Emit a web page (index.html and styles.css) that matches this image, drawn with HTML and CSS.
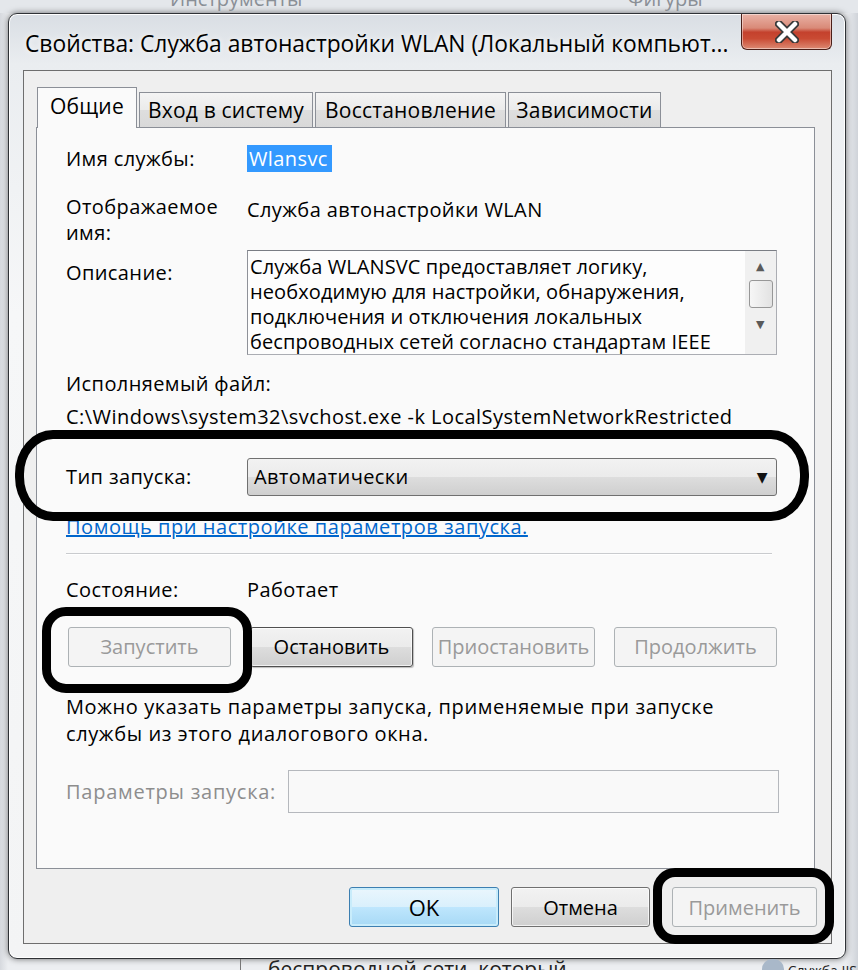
FILE: index.html
```html
<!DOCTYPE html>
<html lang="ru">
<head>
    <meta charset="UTF-8">
    <title>Свойства: Служба автонастройки WLAN</title>
    <link rel="stylesheet" href="styles.css">
</head>
<body>
    <div class="desk-top">
        <span class="desk-word first">Инструменты</span>
        <span class="desk-word">Фигуры</span>
    </div>

    <div class="window">
        <div class="titlebar">
            <div class="title">Свойства: Служба автонастройки WLAN (Локальный компьют...</div>
            <div class="close-btn">
                <svg width="24" height="22" viewBox="0 0 24 22">
                    <path d="M4 3 L20 19 M20 3 L4 19" stroke="#3a3a3a" stroke-width="8" stroke-linecap="round"/>
                    <path d="M4 3 L20 19 M20 3 L4 19" stroke="#ffffff" stroke-width="4.5" stroke-linecap="round"/>
                </svg>
            </div>
        </div>

        <div class="client">
            <div class="tabs">
                <div class="tab active">Общие</div>
                <div class="tab tab-logon">Вход в систему</div>
                <div class="tab tab-recovery">Восстановление</div>
                <div class="tab tab-deps">Зависимости</div>
            </div>

            <div class="panel">
                <div class="field r-name">
                    <div class="label">Имя службы:</div>
                    <div><span class="selected">Wlansvc</span></div>
                </div>
                <div class="field r-display">
                    <div class="label">Отображаемое<br>имя:</div>
                    <div class="value">Служба автонастройки WLAN</div>
                </div>
                <div class="field r-desc">
                    <div class="label desc-label">Описание:</div>
                    <div class="desc-box">
                        <div class="desc-text">Служба WLANSVC предоставляет логику,<br>необходимую для настройки, обнаружения,<br>подключения и отключения локальных<br>беспроводных сетей согласно стандартам IEEE</div>
                        <div class="scrollbar">
                            <span class="arrow">&#9650;</span>
                            <span class="thumb"></span>
                            <span class="arrow">&#9660;</span>
                        </div>
                    </div>
                </div>
                <div class="line r-exe">Исполняемый файл:</div>
                <div class="line r-path">C:\Windows\system32\svchost.exe -k LocalSystemNetworkRestricted</div>
                <div class="field r-type">
                    <div class="label">Тип запуска:</div>
                    <div class="combo">
                        <span>Автоматически</span>
                        <span class="combo-arrow">&#9660;</span>
                    </div>
                </div>
                <a class="help-link" href="#">Помощь при настройке параметров запуска.</a>
                <div class="sep"></div>
                <div class="field r-state">
                    <div class="label">Состояние:</div>
                    <div class="value">Работает</div>
                </div>
                <div class="svc-btns">
                    <div class="btn disabled">Запустить</div>
                    <div class="btn btn-stop">Остановить</div>
                    <div class="btn disabled">Приостановить</div>
                    <div class="btn disabled">Продолжить</div>
                </div>
                <div class="hint">Можно указать параметры запуска, применяемые при запуске<br>службы из этого диалогового окна.</div>
                <div class="params">
                    <div class="label muted">Параметры запуска:</div>
                    <div class="param-input"></div>
                </div>
            </div>

            <div class="dlg-btns">
                <div class="btn btn-ok">OK</div>
                <div class="btn btn-cancel">Отмена</div>
                <div class="btn disabled btn-apply">Применить</div>
            </div>
        </div>
    </div>

    <div class="desk-bottom">
        <span class="desk-line"></span>
        <span class="desk-text">беспроводной сети, который</span>
        <span class="desk-icon"></span>
        <span class="desk-text small">Служба IIS А</span>
    </div>

    <!-- пометки маркером поверх окна -->
    <div class="mark mark-type"></div>
    <div class="mark mark-start"></div>
    <div class="mark mark-apply"></div>
</body>
</html>
```

FILE: styles.css
```css
body {
    margin: 0;
    width: 858px;
    height: 970px;
    overflow: hidden;
    position: relative;
    font-family: "Open Sans", "DejaVu Sans", sans-serif;
    background: linear-gradient(to right, #d6d9de 0, #eceef1 8px, #eceef1 846px, #cfd3d9 858px);
    color: #000;
}
.desk-top {
    height: 13px;
    overflow: hidden;
    background: #e4e7eb;
    color: #8a8f96;
    font-size: 20px;
    line-height: 20px;
    white-space: nowrap;
}
.desk-word {
    display: inline-block;
    margin-top: -11px;
    vertical-align: top;
    margin-left: 320px;
}
.desk-word.first {
    margin-left: 170px;
}
.window {
    margin-left: 8px;
    width: 836px;
    height: 944px;
    border: 1px solid #2f3236;
    border-radius: 9px;
    background: linear-gradient(to bottom, #d9dee4 0, #eaedf0 50px, #f6f7f8 300px, #f3f4f5 100%);
    box-shadow: 0 0 6px rgba(0, 0, 0, 0.55), inset 0 0 0 1px #ffffff;
}
.titlebar {
    display: flex;
    height: 56px;
}
.title {
    padding: 14px 0 0 16px;
    font-size: 22.8px;
    white-space: nowrap;
    text-shadow: 0 0 6px #ffffff;
}
.close-btn {
    margin-left: auto;
    margin-right: 13px;
    width: 89px;
    height: 35px;
    border: 1px solid #4b1f18;
    border-top: none;
    border-radius: 0 0 6px 6px;
    background: linear-gradient(to bottom, #e9b2a6 0, #d98a78 40%, #c4412d 52%, #c94a33 70%, #dd8a73 100%);
    box-shadow: inset 0 0 0 1px rgba(255, 255, 255, 0.45);
    display: flex;
    justify-content: center;
    align-items: center;
}
.client {
    margin-left: 14px;
    width: 807px;
    height: 872px;
    border: 1px solid #6e6e6e;
    background: #efefef;
}
.tabs {
    display: flex;
    align-items: flex-end;
    padding: 16px 0 0 13px;
    height: 40px;
    position: relative;
    z-index: 1;
}
.tab {
    height: 35px;
    box-sizing: border-box;
    border: 1px solid #8b8f97;
    border-bottom: none;
    margin-left: 2px;
    text-align: center;
    font-size: 21px;
    line-height: 35px;
    letter-spacing: 0.2px;
    background: linear-gradient(to bottom, #f4f4f4 0, #ebebeb 50%, #dedede 51%, #d9d9d9 100%);
}
.tab.active {
    width: 100px;
    height: 41px;
    line-height: 36px;
    margin-left: 0;
    margin-bottom: -1px;
    background: #fafafa;
}
.tab-logon {
    width: 174px;
}
.tab-recovery {
    width: 191px;
}
.tab-deps {
    width: 153px;
}
.panel {
    margin-left: 12px;
    border: 1px solid #8b8f97;
    background: #fafafa;
    padding-left: 29px;
    box-sizing: border-box;
    width: 779px;
    height: 742px;
    font-size: 20px;
    line-height: 26px;
    letter-spacing: 0.4px;
}
.field {
    display: grid;
    grid-template-columns: 181px 532px;
}
.line {
    white-space: nowrap;
}
.r-name {
    margin-top: 17px;
    line-height: 27px;
}
.selected {
    display: inline-block;
    background: #3399ff;
    color: #fff;
    padding: 0 4px 0 2px;
}
.r-display {
    margin-top: 22px;
}
.r-display .value {
    padding-top: 3px;
}
.r-desc {
    margin-top: 4px;
}
.desc-label {
    padding-top: 10px;
}
.desc-box {
    width: 530px;
    height: 105px;
    box-sizing: border-box;
    border: 1px solid #abadb3;
    border-top-color: #7a7d84;
    border-left-color: #8e9198;
    background: #fdfdfd;
    display: flex;
}
.desc-text {
    flex: 1;
    padding: 3px 0 0 2px;
    line-height: 25px;
    letter-spacing: 0.1px;
    white-space: nowrap;
    overflow: hidden;
}
.scrollbar {
    width: 31px;
    background: #f0f0f0;
    display: flex;
    flex-direction: column;
    align-items: center;
    padding-top: 8px;
}
.arrow {
    font-size: 11px;
    line-height: 14px;
    color: #5a5a5a;
}
.thumb {
    width: 24px;
    height: 28px;
    margin: 7px 0 9px;
    border: 1px solid #979797;
    border-radius: 3px;
    box-sizing: border-box;
    background: linear-gradient(to right, #f6f6f6, #e2e2e2);
}
.r-exe {
    margin-top: 16px;
}
.r-path {
    margin-top: 7px;
    letter-spacing: 0.45px;
}
.r-type {
    margin-top: 28px;
    align-items: center;
}
.combo {
    width: 530px;
    height: 38px;
    box-sizing: border-box;
    border: 1px solid #707070;
    border-radius: 3px;
    background: linear-gradient(to bottom, #f2f2f2 0, #ebebeb 50%, #dddddd 51%, #cfcfcf 100%);
    display: flex;
    align-items: center;
    padding: 0 8px 0 6px;
}
.combo-arrow {
    margin-left: auto;
    font-size: 14px;
    color: #111;
}
.help-link {
    display: block;
    width: max-content;
    margin-top: 18px;
    color: #0066cc;
    text-decoration: underline;
    letter-spacing: 0.55px;
}
.sep {
    margin-top: 13px;
    width: 706px;
    height: 1px;
    background: #c9cbce;
    box-shadow: 0 1px 0 #ffffff;
}
.r-state {
    margin-top: 23px;
}
.svc-btns {
    margin: 24px 0 0 2px;
    display: grid;
    grid-template-columns: repeat(4, 163px);
    column-gap: 19px;
}
.btn {
    height: 40px;
    box-sizing: border-box;
    border: 1px solid #707070;
    border-radius: 3px;
    background: linear-gradient(to bottom, #f2f2f2 0, #ebebeb 50%, #dddddd 51%, #cfcfcf 100%);
    box-shadow: inset 0 0 0 1px rgba(255, 255, 255, 0.7);
    display: flex;
    justify-content: center;
    align-items: center;
    font-size: 20px;
    letter-spacing: 0;
}
.btn-stop {
    border-color: #4f4f4f;
    box-shadow: inset 0 0 0 1px rgba(255, 255, 255, 0.7), 1px 1px 1px rgba(0, 0, 0, 0.25);
}
.btn.disabled {
    border-color: #adb2b5;
    background: #f4f4f4;
    color: #9a9a9a;
    box-shadow: none;
}
.hint {
    margin-top: 26px;
    line-height: 27px;
    letter-spacing: 0.6px;
    white-space: nowrap;
}
.params {
    margin-top: 23px;
    display: grid;
    grid-template-columns: 222px 491px;
    align-items: center;
}
.muted {
    color: #8d8d8d;
    letter-spacing: 0.75px;
}
.param-input {
    height: 43px;
    border: 1px solid #b5b8bd;
    box-sizing: border-box;
    background: #f9f9f9;
}
.dlg-btns {
    display: flex;
    justify-content: flex-end;
    margin: 18px 14px 0 0;
}
.btn-ok {
    width: 150px;
    margin-right: 12px;
    border-color: #3c7fb1;
    background: linear-gradient(to bottom, #eaf6fd 0, #d9f0fc 50%, #bee6fd 51%, #a7d9f5 100%);
    box-shadow: inset 0 0 0 2px #c8ecfb;
    font-size: 22px;
}
.btn-cancel {
    width: 139px;
    margin-right: 22px;
}
.btn-apply {
    width: 145px;
}
.desk-bottom {
    height: 12px;
    overflow: hidden;
    display: flex;
    align-items: flex-start;
    font-size: 21px;
    line-height: 22px;
    color: #222;
    white-space: nowrap;
}
.desk-line {
    flex: none;
    width: 1px;
    height: 12px;
    background: #777;
    margin: 0 27px 0 240px;
}
.desk-text {
    flex: none;
    margin-top: -1px;
}
.desk-text.small {
    font-size: 14px;
    margin-top: 1px;
}
.desk-icon {
    flex: none;
    width: 22px;
    height: 12px;
    margin: 0 4px 0 195px;
    background: #a9b8c9;
    border-radius: 10px 10px 0 0;
}
.mark {
    position: absolute;
    border: 9px solid #000;
    box-sizing: border-box;
}
.mark-type {
    left: 15px;
    top: 430px;
    width: 794px;
    height: 91px;
    border-radius: 38px / 44px;
}
.mark-start {
    left: 42px;
    top: 607px;
    width: 210px;
    height: 86px;
    border-radius: 24px;
}
.mark-apply {
    left: 653px;
    top: 868px;
    width: 181px;
    height: 76px;
    border-radius: 22px;
}
```
